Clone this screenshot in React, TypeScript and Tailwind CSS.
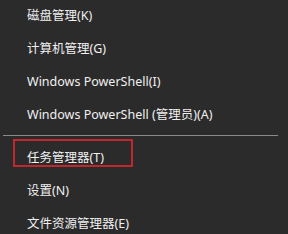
const items = ["磁盘管理(K)", "计算机管理(G)", "Windows PowerShell(I)", "Windows PowerShell (管理员)(A)"];
const items2 = ["任务管理器(T)", "设置(N)", "文件资源管理器(E)"];

function Row({ label, boxed }: { label: string; boxed?: boolean }) {
  return (
    <div className="relative flex h-[33px] items-center pl-[27px]">
      {boxed && <span className="absolute left-[13px] top-[-3px] h-[28px] w-[120px] border-2 border-[#c1272d]" />}
      <span>{label}</span>
    </div>
  );
}

export default function App() {
  return (
    <div
      className="h-[234px] w-[288px] overflow-hidden bg-[#2b2b2b] text-[12.5px] text-[#f0f0f0]"
      style={{ fontFamily: '"Noto Sans", "Noto Sans CJK SC", sans-serif' }}
    >
      {items.map((t) => (
        <Row key={t} label={t} />
      ))}
      <div className="pt-[3px] pb-[6px] pl-[3px] pr-[10px]">
        <div className="h-px bg-[#8a8a8a]" />
      </div>
      {items2.map((t, i) => (
        <Row key={t} label={t} boxed={i === 0} />
      ))}
    </div>
  );
}
